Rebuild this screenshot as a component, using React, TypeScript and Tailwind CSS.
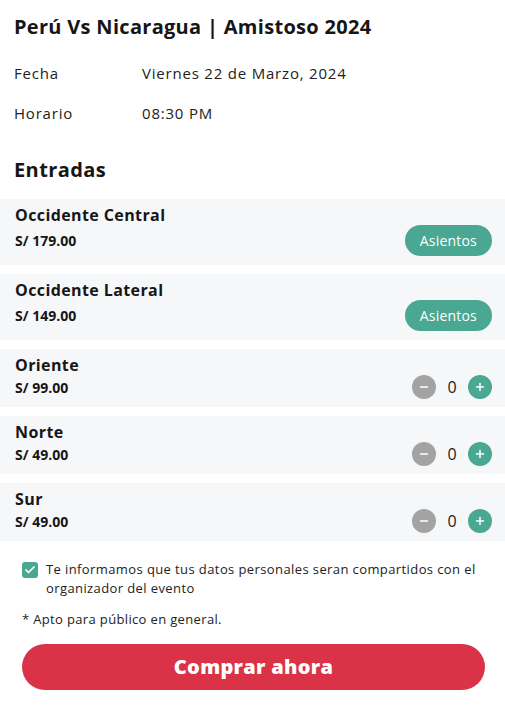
import { Check, Minus, Plus } from 'lucide-react'

type Ticket = {
  name: string
  price: string
  seats?: boolean
}

const tickets: Ticket[] = [
  { name: 'Occidente Central', price: 'S/ 179.00', seats: true },
  { name: 'Occidente Lateral', price: 'S/ 149.00', seats: true },
  { name: 'Oriente', price: 'S/ 99.00' },
  { name: 'Norte', price: 'S/ 49.00' },
  { name: 'Sur', price: 'S/ 49.00' },
]

function Counter() {
  return (
    <div className="flex items-center">
      <button className="flex h-6 w-6 items-center justify-center rounded-full bg-[#a3a3a3] text-white">
        <Minus className="h-3 w-3" strokeWidth={3} />
      </button>
      <span className="w-[32px] text-center text-[16px] leading-[24px] text-[#222]">0</span>
      <button className="flex h-6 w-6 items-center justify-center rounded-full bg-[#4aa791] text-white">
        <Plus className="h-3 w-3" strokeWidth={3} />
      </button>
    </div>
  )
}

function TicketRow({ ticket }: { ticket: Ticket }) {
  if (ticket.seats) {
    return (
      <div className="bg-[#f6f7f9] px-[15px] pt-[6px] pb-[9px]">
        <p className="text-[16px] font-bold leading-[20px] tracking-[0.4px] text-[#161616]">{ticket.name}</p>
        <div className="flex items-center justify-between">
          <span className="text-[14px] font-bold text-[#161616]">{ticket.price}</span>
          <button className="h-[31px] -mr-[2px] rounded-full bg-[#4aa791] px-[15px] text-[14px] font-medium tracking-[0.2px] text-white">
            Asientos
          </button>
        </div>
      </div>
    )
  }
  return (
    <div className="bg-[#f6f7f9] pl-[15px] pr-[13px] pt-[6px] pb-[8px]">
      <p className="text-[16px] font-bold leading-[20px] tracking-[0.4px] text-[#161616]">{ticket.name}</p>
      <div className="flex h-6 items-center justify-between">
        <span className="text-[14px] font-bold text-[#161616]">{ticket.price}</span>
        <Counter />
      </div>
    </div>
  )
}

export default function App() {
  return (
    <div className="w-[505px] bg-white pt-[13px] pb-[18px] font-['Open_Sans',sans-serif] text-[#222]">
      <div className="px-[14px]">
        <h1 className="text-[20px] font-bold leading-[28px] tracking-[0.3px] text-[#161616]">
          Perú Vs Nicaragua | Amistoso 2024
        </h1>

        <div className="mt-[20px] flex flex-col gap-[16px] text-[15px] leading-[24px] tracking-[0.8px]">
          <div className="flex">
            <span className="w-[128px]">Fecha</span>
            <span>Viernes 22 de Marzo, 2024</span>
          </div>
          <div className="flex">
            <span className="w-[128px]">Horario</span>
            <span>08:30 PM</span>
          </div>
        </div>

        <h2 className="mt-[31px] text-[20px] font-bold leading-[28px] tracking-[0.4px] text-[#161616]">Entradas</h2>
      </div>

      <div className="mt-[15px] flex flex-col gap-[9px]">
        {tickets.map((t) => (
          <TicketRow key={t.name} ticket={t} />
        ))}
      </div>

      <div className="pl-[22px] pr-[20px]">
        <label className="mt-[19px] flex items-start gap-[8px] text-[13px] leading-[19px] tracking-[0.4px] text-[#222]">
          <span className="mt-[2px] flex h-4 w-4 shrink-0 items-center justify-center rounded-[3px] bg-[#4aa791] text-white">
            <Check className="h-3 w-3" strokeWidth={3.5} />
          </span>
          <span>Te informamos que tus datos personales seran compartidos con el organizador del evento</span>
        </label>

        <p className="mt-[12px] text-[13px] leading-[19px] tracking-[0.35px] text-[#222]">* Apto para público en general.</p>

        <button className="mt-[15px] h-[46px] w-full rounded-full bg-[#da3348] text-[20px] font-extrabold tracking-[0.3px] text-white">
          Comprar ahora
        </button>
      </div>
    </div>
  )
}
